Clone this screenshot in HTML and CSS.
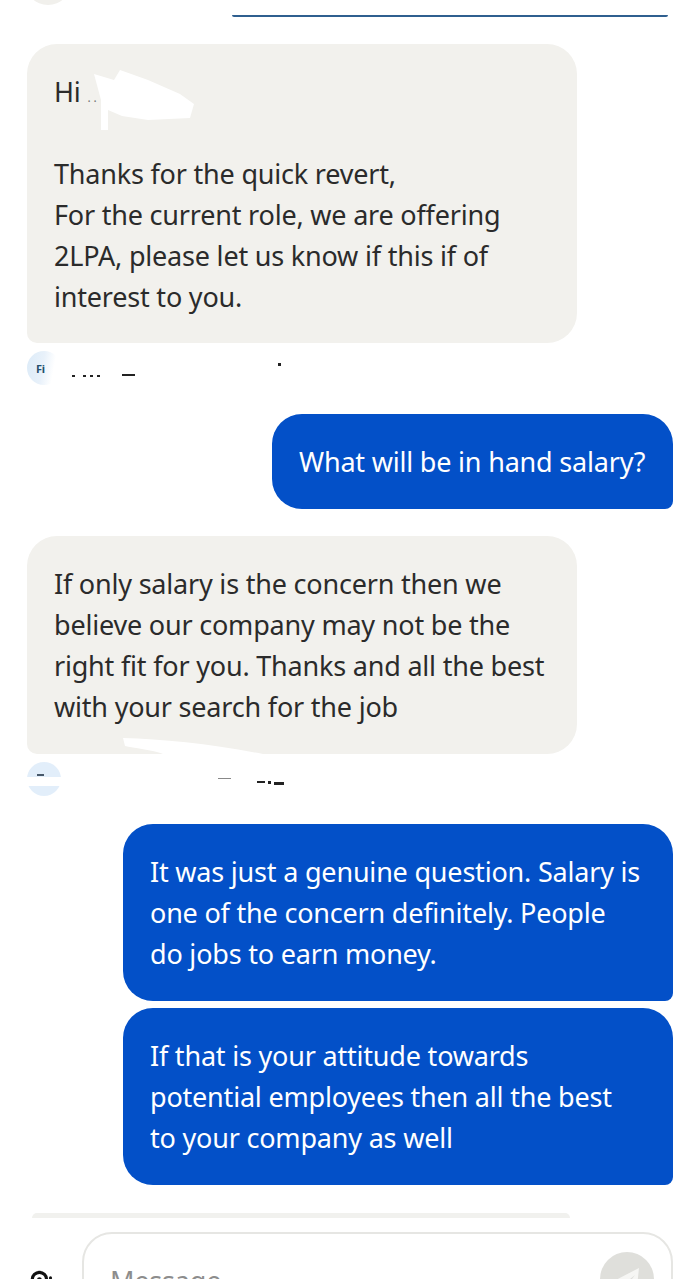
FILE: index.html
```html
<!DOCTYPE html>
<html lang="en">
<head>
    <meta charset="UTF-8">
    <meta name="viewport" content="width=device-width, initial-scale=1.0">
    <title>Messages</title>
    <link rel="stylesheet" href="styles.css">
</head>
<body>
    <div class="screen">
        <!-- previous message, cut off by the top edge -->
        <div class="top-strip">
            <div class="top-avatar"></div>
            <div class="top-line"></div>
        </div>

        <div class="bubble them first">
            Hi <span class="tiny">..</span><br><br>
            Thanks for the quick revert,<br>
            For the current role, we are offering<br>
            2LPA, please let us know if this if of<br>
            interest to you.
            <svg class="smudge smudge-name" viewBox="0 0 110 65"><path d="M6 8 L26 14 L32 4 L60 14 L92 28 L106 38 L102 52 L60 54 L34 50 L20 44 L20 64 L13 64 L13 34 Z" fill="#fff"/></svg>
        </div>
        <div class="sender">
            <div class="avatar"><span class="avatar-text">Fi</span></div>
            <span class="dot dot-a"></span>
            <span class="dot dot-b"></span>
            <span class="dot dot-c"></span>
            <span class="dot dot-d"></span>
            <span class="dot dot-e"></span>
            <span class="dot dot-f"></span>
        </div>

        <div class="bubble me reply-one">What will be in hand salary?</div>

        <div class="bubble them second">
            If only salary is the concern then we<br>
            believe our company may not be the<br>
            right fit for you. Thanks and all the best<br>
            with your search for the job
            <svg class="smudge smudge-bottom" viewBox="0 0 140 16"><path d="M0 0 C40 1 90 6 140 16 L40 16 C30 12 10 10 2 8 Z" fill="#fff"/></svg>
        </div>
        <div class="sender">
            <div class="avatar striped"><span class="avatar-dash"></span></div>
            <span class="dot dot-g"></span>
            <span class="dot dot-h"></span>
            <span class="dot dot-i"></span>
            <span class="dot dot-j"></span>
        </div>

        <div class="bubble me reply-two">
            It was just a genuine question. Salary is<br>
            one of the concern definitely. People<br>
            do jobs to earn money.
        </div>
        <div class="bubble me reply-three">
            If that is your attitude towards<br>
            potential employees then all the best<br>
            to your company as well
        </div>

        <div class="next-bubble"></div>

        <div class="composer">
            <svg class="attach" viewBox="0 0 30 24"><circle cx="13" cy="12" r="9" fill="none" stroke="#111" stroke-width="4"/><circle cx="13" cy="12" r="3" fill="#111"/><circle cx="27" cy="10" r="2" fill="#111"/><circle cx="27" cy="18" r="2" fill="#111"/></svg>
            <div class="input">
                <span class="placeholder">Message</span>
                <div class="send">
                    <svg viewBox="0 0 54 54"><path d="M39 16 L8 32 L19 36 L35 23 L23 39 L23 47 L29 41 L36 44 Z" fill="#f6f6f4"/></svg>
                </div>
            </div>
        </div>
    </div>
</body>
</html>
```

FILE: styles.css
```css
html, body {
    margin: 0;
    padding: 0;
    background: #fff;
}

.screen {
    width: 700px;
    height: 1279px;
    overflow: hidden;
    display: flex;
    flex-direction: column;
    align-items: flex-start;
    font-family: "Noto Sans", "Open Sans", sans-serif;
    font-size: 27px;
    line-height: 41px;
    letter-spacing: -0.2px;
}

.screen > * {
    flex: none;
}

/* top of the screen */
.top-strip {
    width: 100%;
    height: 44px;
    position: relative;
}

.top-avatar {
    position: absolute;
    left: 25px;
    top: -40px;
    width: 46px;
    height: 45px;
    border-radius: 50%;
    background: #f1f0ec;
}

.top-line {
    position: absolute;
    left: 232px;
    top: 15px;
    width: 436px;
    height: 2px;
    border-radius: 0 0 4px 4px;
    background: #2f5f8f;
}

/* bubbles */
.bubble {
    position: relative;
    box-sizing: border-box;
    padding: 27px 27px 26px;
    white-space: nowrap;
}

.them {
    margin-left: 27px;
    width: 550px;
    background: #f2f1ed;
    color: #2b2b2b;
    border-radius: 30px 30px 30px 10px;
}

.me {
    align-self: flex-end;
    margin-right: 27px;
    background: #0350c8;
    color: #fff;
    border-radius: 30px 30px 8px 30px;
}

.tiny {
    font-size: 12px;
    line-height: 0;
    letter-spacing: 3px;
    color: #777;
}

.first {
    height: 299px;
}

.second {
    margin-top: 27px;
    height: 218px;
}

.reply-one {
    margin-top: 29px;
    width: 401px;
    height: 95px;
}

.reply-two {
    margin-top: 28px;
    width: 550px;
    height: 177px;
}

.reply-three {
    margin-top: 7px;
    width: 550px;
    height: 177px;
}

/* scribbled-out parts */
.smudge {
    position: absolute;
}

.smudge-name {
    left: 61px;
    top: 22px;
    width: 110px;
    height: 65px;
}

.smudge-bottom {
    left: 96px;
    top: 202px;
    width: 140px;
    height: 16px;
}

.sender {
    position: relative;
    margin-left: 27px;
    margin-top: 8px;
    width: 300px;
    height: 34px;
}

.avatar {
    width: 34px;
    height: 34px;
    border-radius: 50%;
    background: linear-gradient(100deg, #dcebf8 0, #e8f1fa 45%, #fff 75%);
    overflow: hidden;
    position: relative;
}

.avatar.striped {
    background: linear-gradient(#e2eefa 0, #e2eefa 44%, #fff 44%, #fff 70%, #e2eefa 70%);
}

.avatar-text {
    position: absolute;
    left: 9px;
    top: 0;
    font-size: 11px;
    line-height: 36px;
    font-weight: 700;
    color: #24506e;
}

.avatar-dash {
    position: absolute;
    left: 10px;
    top: 12px;
    width: 7px;
    height: 2px;
    background: #47586a;
}

.dot {
    position: absolute;
    width: 3px;
    height: 2px;
    background: #222;
}

.dot-a { left: 45px; top: 24px; }
.dot-b { left: 56px; top: 24px; }
.dot-c { left: 63px; top: 24px; }
.dot-d { left: 70px; top: 24px; }
.dot-e { left: 95px; top: 23px; width: 13px; }
.dot-f { left: 251px; top: 12px; height: 3px; }
.dot-g { left: 191px; top: 16px; width: 13px; height: 1px; background: #888; }
.dot-h { left: 230px; top: 19px; width: 8px; }
.dot-i { left: 241px; top: 19px; height: 3px; }
.dot-j { left: 247px; top: 20px; width: 10px; height: 3px; }

.next-bubble {
    margin: 28px 0 0 32px;
    width: 538px;
    height: 5px;
    background: #f1f1ee;
    border-radius: 16px 16px 0 0;
}

/* message box */
.composer {
    display: flex;
    align-items: flex-start;
    margin-top: 14px;
    width: 100%;
}

.attach {
    flex: none;
    width: 24px;
    height: 19px;
    margin: 38px 0 0 29px;
}

.input {
    flex: none;
    box-sizing: border-box;
    display: flex;
    justify-content: space-between;
    margin-left: 29px;
    width: 591px;
    height: 90px;
    padding: 18px 17px 0 26px;
    border: 2px solid #e6e6e3;
    border-radius: 30px;
}

.placeholder {
    margin-top: 8px;
    color: #8d8d8d;
}

.send {
    width: 54px;
    height: 54px;
    border-radius: 50%;
    background: #dfdfdb;
}

.send svg {
    display: block;
    width: 54px;
    height: 54px;
}
```
